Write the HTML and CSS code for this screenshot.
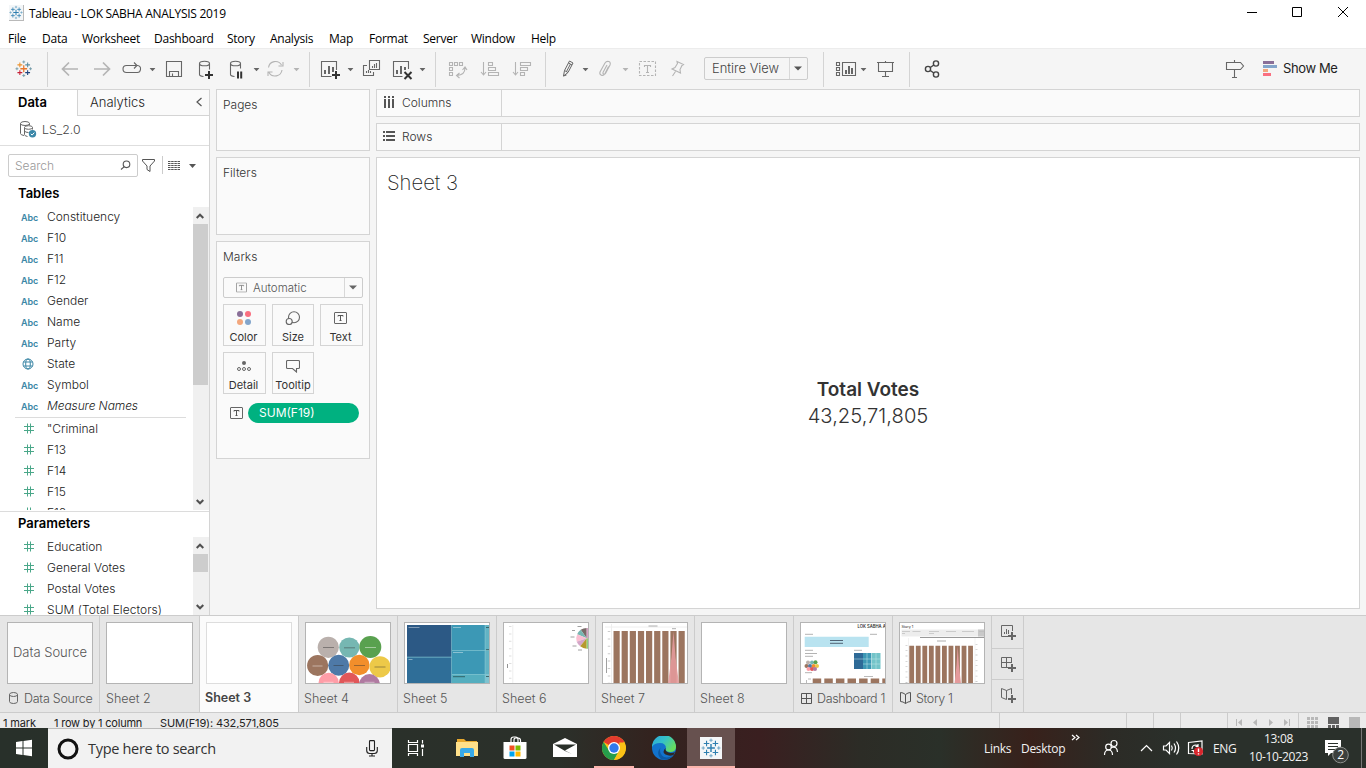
FILE: index.html
```html
<!DOCTYPE html>
<html lang="en">
<head>
<meta charset="utf-8">
<title>Tableau - LOK SABHA ANALYSIS 2019</title>
<link rel="stylesheet" href="styles.css">
</head>
<body>
<svg class="defs" width="0" height="0">
  <defs>
    <symbol id="caret" viewBox="0 0 6 4"><path d="M0 .5h6L3 3.8z"/></symbol>
    <symbol id="hash" viewBox="0 0 12 12"><path d="M4.500 .5v10M7.500 .5v10M1 3.500h10M1 7.500h10" fill="none" stroke="#4aa789"/></symbol>
    <symbol id="plus" viewBox="0 0 8 8"><path d="M4 0v8M0 4h8" fill="none" stroke="#333" stroke-width="2"/></symbol>
    <symbol id="tbox" viewBox="0 0 13 12"><rect x=".5" y=".5" width="12" height="11" rx=".5" fill="none" stroke="#666"/><path d="M4 4.500V3.500h5v1M6.500 3.500v5M5.500 8.500h2" fill="none" stroke="#555"/></symbol>
    <symbol id="up" viewBox="0 0 8 6"><path d="M.7 5L4 1.700 7.300 5" fill="none" stroke="#505050" stroke-width="2"/></symbol>
    <symbol id="down" viewBox="0 0 8 6"><path d="M.7 1L4 4.300 7.300 1" fill="none" stroke="#505050" stroke-width="2"/></symbol>
    <symbol id="mark" viewBox="0 0 18 18">
      <path d="M9 5.500v7M5.500 9h7" stroke="var(--c0)" stroke-width="1.300"/>
      <path d="M5 2.500v5M2.500 5h5" stroke="var(--c1)"/>
      <path d="M13 2.500v5M10.500 5h5" stroke="var(--c2)"/>
      <path d="M5 10.500v5M2.500 13h5" stroke="var(--c3)"/>
      <path d="M13 10.500v5M10.500 13h5" stroke="var(--c4)"/>
      <path d="M9 .5v3M7.500 2h3M9 14.500v3M7.500 16h3M2 7.500v3M.5 9h3M16 7.500v3M14.500 9h3" stroke="var(--c5)" stroke-width=".9"/>
    </symbol>
  </defs>
</svg>

<header class="titlebar">
  <svg class="appicon" width="15" height="16" viewBox="0 0 15 16"><rect width="15" height="16" fill="#b9b9b9"/><rect width="14" height="15" fill="#f3f6f8"/><use href="#mark" x="0" y="0" width="14" height="15"/></svg>
  <span class="apptitle">Tableau - LOK SABHA ANALYSIS 2019</span>
  <svg class="winbtns" width="136" height="26" viewBox="1230 0 136 26"><path d="M1247 12.500h10M1292.500 7.500h9v9h-9zM1338 7l10 10M1348 7l-10 10" fill="none" stroke="#000"/></svg>
</header>

<nav class="menubar">
  <span>File</span><span>Data</span><span>Worksheet</span><span>Dashboard</span><span>Story</span><span>Analysis</span><span>Map</span><span>Format</span><span>Server</span><span>Window</span><span>Help</span>
</nav>

<div class="toolbar">
  <div class="group first">
    <svg class="brand" width="47" height="35" viewBox="0 52 47 35"><use href="#mark" x="15" y="60" width="17.500" height="17.500"/></svg>
  </div>
  <div class="group">
    <svg class="dim" width="39" height="35" viewBox="48 52 39 35"><path d="M78 69H63M69 62.500L62.500 69l6.500 6.500"/></svg>
    <svg class="dim" width="31" height="35" viewBox="87 52 31 35"><path d="M94 69h15M103 62.500l6.500 6.500-6.500 6.500"/></svg>
    <svg width="41" height="35" viewBox="118 52 41 35"><path d="M136 65.500h-9.500a3.500 3.500 0 0 0 0 7h10a3.500 3.500 0 0 0 1-7M134 62.500l3 3-3 3"/><use class="solid" href="#caret" x="149.500" y="67.500" width="6" height="4"/></svg>
    <svg width="31" height="35" viewBox="159 52 31 35"><path d="M166.500 61.500h15v15h-15zM169.500 76.500v-5h9v5M172.500 76v-2.500"/></svg>
    <svg width="32" height="35" viewBox="190 52 32 35"><path d="M199.500 63.500v11q0 1.500 4 2M209.500 63.500v6"/><ellipse cx="204.500" cy="63.500" rx="5" ry="2.300"/><use href="#plus" x="205" y="71" width="8" height="8"/></svg>
    <svg width="41" height="35" viewBox="222 52 41 35"><path d="M230.500 63.500v11q0 1.500 4 2M240.500 63.500v5"/><ellipse cx="235.500" cy="63.500" rx="5" ry="2.300"/><path d="M238 71.500v7M241.200 71.500v7" class="heavy"/><use class="solid" href="#caret" x="253.500" y="67.500" width="6" height="4"/></svg>
    <svg class="dim thin" width="46" height="35" viewBox="263 52 46 35"><path d="M268.500 67.500a7 7 0 0 1 13-2.500M282 70a7 7 0 0 1-13 2.500M283 62v4h-4.500M268 76v-4h4.500"/><use class="solid" href="#caret" x="293.500" y="67.500" width="6" height="4"/></svg>
  </div>
  <div class="group">
    <svg width="49" height="35" viewBox="310 52 49 35"><path d="M336.500 70v-8.500h-15v15h10"/><path class="bars" d="M325 74v-4M329 74v-8M333 72v-5"/><use href="#plus" x="332" y="71" width="8" height="8"/><use class="solid" href="#caret" x="347.500" y="67.500" width="6" height="4"/></svg>
    <svg width="28" height="35" viewBox="359 52 28 35"><path d="M369.500 60.500h10v9h-10zM367 65.500h-3.500v10h10v-3.500M372.500 68v-2M374.500 68v-4M376.500 68v-5M366.500 73v-2M368.500 73v-3M370.500 73v-2"/></svg>
    <svg width="48" height="35" viewBox="387 52 48 35"><path d="M408.500 69v-7.500h-15v15h9"/><path class="bars" d="M397 74v-4M401 74v-8M405 70v-3"/><path class="heavy" d="M404.500 72l7 7M411.500 72l-7 7"/><use class="solid" href="#caret" x="419.500" y="67.500" width="6" height="4"/></svg>
  </div>
  <div class="group">
    <svg class="dim thin" width="35" height="35" viewBox="436 52 35 35"><path d="M449.500 62.500h3v3h-3zM454.500 62.500h3v3h-3zM459.500 62.500h3v3h-3zM449.500 67.500h3v3h-3zM449.500 72.500h3v3h-3zM465 68q0 7-8 7.500M462.500 70l2.500-3 2 3M459.500 73l-3 2.500 3 2.500"/></svg>
    <svg class="dim thin" width="35" height="35" viewBox="471 52 35 35"><path d="M483.500 62v13M481 72l2.500 3 2.500-3M488.500 62.500h4v3h-4zM488.500 67.500h7v3h-7zM488.500 72.500h10v3h-10z"/></svg>
    <svg class="dim thin" width="39" height="35" viewBox="506 52 39 35"><path d="M515.500 62v13M513 72l2.500 3 2.500-3M520.500 62.500h10v3h-10zM520.500 67.500h7v3h-7zM520.500 72.500h4v3h-4z"/></svg>
  </div>
  <div class="group">
    <svg width="46" height="35" viewBox="546 52 46 35"><path class="fine" d="M564.500 70.500l5-9.500 3.500 2-5 9.500-4.500 3.500zM564.500 70.500l3.500 2M563.500 76l3-1M568.500 63l3.500 2M570.500 64l-4 7.500"/><use class="solid" href="#caret" x="582.500" y="67.500" width="6" height="4"/></svg>
    <svg class="dim thin" width="41" height="35" viewBox="592 52 41 35"><path d="M608.500 66.500l-3.500 7c-2 3.500-6 1.500-5-1.500l5-9c2-3 6.500-1.500 5 2l-4.500 8.500c-1 1.500-3 .5-2.500-1l4-7.500"/><use class="solid" href="#caret" x="622.500" y="67.500" width="6" height="4"/></svg>
    <svg class="dim thin" width="30" height="35" viewBox="633 52 30 35"><path stroke-dasharray="2.500 1.500" d="M639.500 61.500h16v14h-16z"/><path d="M644.500 67v-1.500h6V67M647.500 65.500v7M646 72.500h3"/></svg>
    <svg class="dim thin" width="41" height="35" viewBox="663 52 41 35"><path d="M677 61.500l6.500 3-1.500 1-2 4 .5 3.500-8.500-4 3-1.500 2.500-4zM675.500 71.500l-3 4.500"/></svg>
    <div class="select view"><span>Entire View</span><i><svg class="solid" width="8" height="5"><path d="M0 .5h8L4 4.500z"/></svg></i></div>
  </div>
  <div class="group">
    <svg width="46" height="35" viewBox="824 52 46 35"><path d="M836.500 62.500h3v3h-3zM836.500 67.500h3v3h-3zM836.500 72.500h3v3h-3zM842.500 62.500h13v13h-13z"/><path class="bars" d="M846 74v-4M849 74v-8M852 74v-6"/><use class="solid" href="#caret" x="860.500" y="67.500" width="6" height="4"/></svg>
    <svg width="39" height="35" viewBox="870 52 39 35"><path d="M877 62.500h17M878.500 63v8.500h14V63M885.500 61v1M885.500 72v4.500M882 76.500h7"/></svg>
  </div>
  <div class="group">
    <svg class="share" width="44" height="35" viewBox="910 52 44 35"><circle cx="928" cy="69" r="2.600"/><circle cx="936" cy="63.500" r="2.600"/><circle cx="936" cy="74.500" r="2.600"/><path d="M930.300 67.500l3.500-2.500M930.300 70.500l3.500 2.500"/></svg>
  </div>
  <div class="right">
    <svg width="30" height="35" viewBox="1220 52 30 35"><path d="M1226.500 62.500h14l3 3.500-3 3.500h-14zM1234.500 60v2M1234.500 70v7.500M1232 77.500h5"/></svg>
    <svg class="showicon" width="14" height="15"><path fill="#8a6f98" d="M0 0h11v3H0z"/><path fill="#83a5cb" d="M0 4h14v3H0z"/><path fill="#f3a77d" d="M0 8h5v3H0z"/><path fill="#fa6f80" d="M0 12h8v3H0z"/></svg>
    <span class="showme">Show Me</span>
  </div>
</div>

<main class="work">
  <aside class="datapane">
    <div class="panetabs"><b>Data</b><span>Analytics<svg width="6" height="10"><path d="M5.500 1L1 5l4.500 4" fill="none" stroke="#555" stroke-width="1.200"/></svg></span></div>
    <div class="source">
      <svg width="17" height="17" viewBox="0 0 17 17" fill="none" stroke="#666"><path d="M.5 2.500v10q0 1.500 3.500 2M9.500 2.500V4"/><ellipse cx="5" cy="2.500" rx="4.500" ry="2"/><path d="M4.500 6.500v7q0 1.500 3 2M12.500 6.500v2M4.500 10q1 1.500 4 1.500"/><ellipse cx="8.500" cy="6.500" rx="4" ry="1.800" fill="#fff"/><circle cx="12.500" cy="12.800" r="3.700" fill="#3a87a8" stroke="none"/><path d="M10.800 12.800l1.300 1.300 2.200-2.500" stroke="#fff"/></svg>
      <span>LS_2.0</span>
    </div>
    <div class="searchrow">
      <div class="search"><span>Search</span><svg width="11" height="11" fill="none" stroke="#555" stroke-width="1.100"><circle cx="6.500" cy="4.300" r="3.300"/><path d="M4 6.800L1 9.500"/></svg></div>
      <svg width="13" height="13" fill="none" stroke="#555"><path d="M.5.500h12v1.500L8 7v5.500L5 10.500V7L.5 2z"/></svg>
      <svg class="views" width="35" height="20" viewBox="0 0 35 20"><path d="M.5 0v18" stroke="#ccc"/><g stroke="#555" stroke-dasharray="2.500 .67"><path d="M6 5.500h12.500M6 7.500h12.500M6 9.500h12.500M6 11.500h12.500M6 13.500h12.500"/></g><path d="M27 8h7l-3.500 4z" fill="#555"/></svg>
    </div>
    <h2>Tables</h2>
    <div class="scroller tables">
      <ul>
        <li><em>Abc</em>Constituency</li><li><em>Abc</em>F10</li><li><em>Abc</em>F11</li><li><em>Abc</em>F12</li><li><em>Abc</em>Gender</li><li><em>Abc</em>Name</li><li><em>Abc</em>Party</li>
        <li><svg class="globe" width="12" height="12" fill="none" stroke="#3c87a6"><circle cx="6" cy="6" r="5"/><ellipse cx="6" cy="6" rx="2.300" ry="5"/><path d="M1.500 4h9M1.500 8h9"/></svg>State</li>
        <li><em>Abc</em>Symbol</li><li class="slant"><em>Abc</em>Measure Names</li>
        <li class="rule"></li>
        <li><svg class="ic"><use href="#hash"/></svg>"Criminal</li><li><svg class="ic"><use href="#hash"/></svg>F13</li><li><svg class="ic"><use href="#hash"/></svg>F14</li><li><svg class="ic"><use href="#hash"/></svg>F15</li><li><svg class="ic"><use href="#hash"/></svg>F16</li>
      </ul>
      <div class="sb"><svg width="8" height="6"><use href="#up"/></svg><i></i><svg width="8" height="6"><use href="#down"/></svg></div>
    </div>
    <h2 class="params">Parameters</h2>
    <div class="scroller parameters">
      <ul>
        <li><svg class="ic"><use href="#hash"/></svg>Education</li><li><svg class="ic"><use href="#hash"/></svg>General Votes</li><li><svg class="ic"><use href="#hash"/></svg>Postal Votes</li><li class="total"><svg class="ic"><use href="#hash"/></svg>SUM (Total Electors)</li>
      </ul>
      <div class="sb"><svg width="8" height="6"><use href="#up"/></svg><i></i><svg width="8" height="6"><use href="#down"/></svg></div>
    </div>
  </aside>

  <section class="cards">
    <div class="card pages">Pages</div>
    <div class="card filters">Filters</div>
    <div class="card marks">
      <div>Marks</div>
      <div class="select type"><svg width="11" height="11" viewBox="0 0 13 12" opacity=".75"><use href="#tbox"/></svg><span>Automatic</span><i><svg class="solid" width="8" height="5"><path d="M0 .5h8L4 4.500z"/></svg></i></div>
      <div class="markgrid">
        <div><svg width="14" height="14"><circle cx="3" cy="3" r="3" fill="#8a6f98"/><circle cx="11" cy="3" r="3" fill="#fa6f80"/><circle cx="3" cy="11" r="3" fill="#f3a77d"/><circle cx="11" cy="11" r="3" fill="#83a5cb"/></svg>Color</div>
        <div class="size"><svg width="16" height="14" fill="none" stroke="#666" stroke-width="1.100"><circle cx="9" cy="6.200" r="5.500"/><circle cx="4.200" cy="10.500" r="3" fill="#fafafa"/></svg>Size</div>
        <div><svg width="13" height="14" viewBox="0 0 13 14"><use href="#tbox" y="1" width="13" height="12"/></svg>Text</div>
        <div><svg width="14" height="14" fill="none" stroke="#666"><circle cx="7" cy="4" r="2" fill="#666" stroke="none"/><circle cx="2" cy="10" r="1.500"/><circle cx="7" cy="10" r="1.500"/><circle cx="12" cy="10" r="1.500"/></svg>Detail</div>
        <div class="size"><svg width="14" height="14" fill="none" stroke="#666" stroke-width="1.100"><path d="M1.500 1.500h11q1 0 1 1v6q0 1-1 1h-2V13l-4-3.500h-5q-1 0-1-1v-6q0-1 1-1z"/></svg>Tooltip</div>
      </div>
      <div class="pillrow"><svg width="13" height="12"><use href="#tbox"/></svg><span>SUM(F19)</span></div>
    </div>
  </section>

  <section class="canvas">
    <div class="shelf"><div><svg width="12" height="12" stroke="#555" stroke-width="2"><path d="M2 0v2M6 0v2M10 0v2M2 3v9M6 3v9M10 3v9"/></svg>Columns</div></div>
    <div class="shelf"><div><svg width="12" height="12" stroke="#555" stroke-width="2"><path d="M0 2h2M0 6h2M0 10h2M3 2h9M3 6h9M3 10h9"/></svg>Rows</div></div>
    <div class="viz">
      <h1>Sheet 3</h1>
      <div class="kpi"><strong>Total Votes</strong><span>43,25,71,805</span></div>
    </div>
  </section>
</main>

<div class="sheets">
  <div class="tab ds"><div class="thumb">Data Source</div><label><svg width="10" height="12" fill="none" stroke="#666"><ellipse cx="4.500" cy="2.500" rx="4" ry="2"/><path d="M.5 2.500v7q0 2 4 2t4-2v-7"/></svg>Data Source</label></div>
  <div class="tab"><div class="thumb"></div><label>Sheet 2</label></div>
  <div class="tab active"><div class="thumb"></div><label>Sheet 3</label></div>
  <div class="tab"><div class="thumb"><svg viewBox="306 623 84 60"><circle cx="328.300" cy="647.300" r="10.600" fill="#bab0ac"/><circle cx="349.300" cy="647.500" r="10.100" fill="#76b7b2"/><circle cx="370.300" cy="647" r="11" fill="#59a14f"/><circle cx="317.700" cy="665.500" r="10.600" fill="#9c755f"/><circle cx="338.700" cy="665.300" r="10.500" fill="#4e79a7"/><circle cx="359.300" cy="665" r="10.200" fill="#f28e2b"/><circle cx="380" cy="666.800" r="10.600" fill="#edc948"/><circle cx="328.700" cy="683" r="10.200" fill="#ff9da7"/><circle cx="349.300" cy="683" r="10.400" fill="#e15759"/><circle cx="369.500" cy="684.500" r="10.400" fill="#b07aa1"/><path d="M323 647.500h11M344 647.800h11M333.500 665.500h10M354 665.500h11M374.500 667h11" stroke="#333" stroke-opacity=".5" stroke-width=".9"/><path d="M365 647.500h11M312.500 666h10M323.500 682.300h10M344 682.300h10M364.500 682.300h10" stroke="#fff" stroke-opacity=".5" stroke-width=".9"/></svg></div><label>Sheet 4</label></div>
  <div class="tab"><div class="thumb"><svg viewBox="405 623 84 60"><path fill="#7fc3d0" d="M407 625h82v58h-82z"/><path fill="#2c5985" d="M407 625h44.300v31.800H407z"/><path fill="#2f6e98" d="M407 657.600h44.300V683H407z"/><path fill="#3c98b5" d="M452 625h32.700v25H452zM452 650.800h32.700V674H452z"/><path fill="#55aebf" d="M452 674.700h32.700V683H452z"/><path fill="#62b3c4" d="M485.500 625h4v25h-4zM485.500 651h4v23h-4z"/><path d="M408.500 627.500h11M408.500 659.500h4M453 627.500h8M453 652.500h10" stroke="#fff" stroke-opacity=".5" stroke-width=".8"/><path d="M453 676.700h12M486 627.500h3M486 649.700h3M486 676.500h3" stroke="#244" stroke-opacity=".7"/></svg></div><label>Sheet 5</label></div>
  <div class="tab"><div class="thumb"><svg viewBox="504 623 84 60"><path d="M512.800 625v58" stroke="#eee"/><path d="M510.200 626v57" stroke="#ddd" stroke-width="2.500" stroke-dasharray="1 6.400"/><path d="M507.500 664v4" stroke="#777" stroke-width=".8"/><g transform="translate(586.700 638.300)"><path fill="#796b68" d="M0 0L-6-8.500A10.400 10.400 0 0 1 0-10.400z"/><path fill="#76b7b2" d="M0 0l-9.500-4A10.400 10.400 0 0 1-6-8.500z"/><path fill="#fabfd2" d="M0 0l-10 3.500A10.400 10.400 0 0 1-9.500-4z"/><path fill="#d4a6c8" d="M0 0l-6.500 8A10.400 10.400 0 0 1-10 3.500z"/><path fill="#b6992d" d="M0 0v10.400A10.400 10.400 0 0 1-6.500 8z"/><path fill="#d7a0c5" d="M0 0v-10.400h3V0z"/><path fill="#8cd17d" d="M0 0v10.400h3V0z"/></g><path d="M577.500 626.500h4M572 630.500h3M570.500 637h4M572.500 646h4M578 650h4" stroke="#888" stroke-width=".8"/></svg></div><label>Sheet 6</label></div>
  <div class="tab"><div class="thumb"><svg viewBox="603 623 84 60"><path d="M611.500 624v60M605 627h83" stroke="#eee"/><path d="M609 631v52" stroke="#ccc" stroke-width="2.500" stroke-dasharray="1 6.400"/><path d="M606.500 658v15" stroke="#888" stroke-width=".8"/><path d="M648.500 626h9M672 628.700h4" stroke="#999" stroke-width=".8"/><path d="M613.500 657h71.300" stroke="#9c755f" stroke-width="52" stroke-dasharray="6.200 1.930"/><path d="M668 683.500q4-25 5.500-52 1.500 27 5.500 52z" fill="#e49a9b" fill-opacity=".9"/></svg></div><label>Sheet 7</label></div>
  <div class="tab"><div class="thumb"></div><label>Sheet 8</label></div>
  <div class="tab"><div class="thumb"><svg viewBox="801 623 84 60"><text x="857.500" y="628.300" font-size="4.200" font-weight="600" fill="#333">LOK SABHA ANALYSIS</text><path fill="#b9e3f0" d="M804.700 636.700h64V647h-64z"/><path d="M830 640.500h13M830 643.300h13" stroke="#456" stroke-width=".9"/><path d="M805 634.300h8M870 634.300h7M805 650.300h8M854 650.300h8M805 653.500h12M805 656.300h8M805 672.700h7" stroke="#aaa" stroke-width=".9"/><path fill="#2e6a97" d="M854 653h9v16h-9z"/><path fill="#3c98b5" d="M863 653h8.500v16H863z"/><path fill="#73c4c9" d="M871.500 653h9v16h-9z"/><path d="M854 659h26.500M863 664h17.500M867 653v16M871.500 653v16M876 653v16" stroke="#c6e8ea" stroke-width=".5"/><g><circle cx="808" cy="662.500" r="2" fill="#bab0ac"/><circle cx="812" cy="662.500" r="2" fill="#76b7b2"/><circle cx="815.500" cy="662.300" r="2" fill="#59a14f"/><circle cx="806.500" cy="666" r="2" fill="#9c755f"/><circle cx="810" cy="666" r="2" fill="#4e79a7"/><circle cx="813.700" cy="666" r="2" fill="#f28e2b"/><circle cx="817" cy="666" r="2" fill="#edc948"/><circle cx="808.500" cy="669" r="2" fill="#ff9da7"/><circle cx="812" cy="669" r="2" fill="#e15759"/><circle cx="815" cy="669" r="2" fill="#b07aa1"/></g><path d="M812.700 681h73" stroke="#9c755f" stroke-width="5" stroke-dasharray="8.500 3.100"/><path d="M864 676.500h9M808 679h3M806.500 680v3" stroke="#aaa" stroke-width=".8"/></svg></div><label class="dash"><svg width="11" height="11" fill="none" stroke="#555"><path d="M.5.500h10v10H.5zM5.500.5v10M.5 5.500h10"/></svg>Dashboard 1</label></div>
  <div class="tab"><div class="thumb"><svg viewBox="900 623 84 60"><text x="901.500" y="627.600" font-size="3.600" font-weight="500" fill="#444">Story 1</text><path fill="#ededed" d="M901.500 629.500H984v7h-82.500z"/><path fill="#c8c8c8" d="M978 629.500h6v7h-6z"/><path d="M902 631.500h8M912.500 631.500h8M929 631.500h10M946 631.500h10M962 631.500h12M902 633.500h3M929 633.500h5M979 631.500h5" stroke="#bbb" stroke-width=".7"/><path d="M920 637.500h64" stroke="#999"/><path d="M937 641h9" stroke="#999" stroke-width=".8"/><path d="M908.500 638v46M975 638v46" stroke="#eee" stroke-width=".7"/><path d="M906.500 645v38M976.500 644v39" stroke="#ccc" stroke-width="2" stroke-dasharray=".8 4.500"/><path d="M909.300 665h64" stroke="#9c755f" stroke-width="38.500" stroke-dasharray="4.800 1.740"/><path d="M954.500 683.500q2.500-18 3.200-37.500.8 19.500 3.300 37.500z" fill="#e49a9b"/></svg></div><label class="dash"><svg width="11" height="12" fill="none" stroke="#555"><path d="M5.500 2.500v9M.5.500Q3 .5 5.500 2.500 8 .5 10.500.5v9Q8 9.500 5.500 11.500 3 9.500.5 9.500z"/></svg>Story 1</label></div>
  <div class="newbtns">
    <div><svg width="15" height="15" fill="none" stroke="#666"><path d="M11.500 6V.5H.5v11H7M3.500 9V7M5.500 9V4M7.500 9V5"/><path d="M11 7v8M7 11h8" stroke-width="2"/></svg></div>
    <div><svg width="15" height="15" fill="none" stroke="#666"><path d="M10.500 6V.5H.5v10H7M5.500.5v10M.5 5.500h10"/><path d="M11 7v8M7 11h8" stroke-width="2"/></svg></div>
    <div><svg width="15" height="15" fill="none" stroke="#666"><path d="M10.500 6V.5L5.500 2.500.5.500v9l5 2v-9"/><path d="M11 7v8M7 11h8" stroke-width="2"/></svg></div>
  </div>
</div>

<div class="status">
  <span class="s1">1 mark</span><span class="s2">1 row by 1 column</span><span class="s3">SUM(F19): 432,571,805</span>
  <svg width="367" height="15" viewBox="999 713 367 15"><path d="M999.500 713v15M1126.500 713v15M1153.500 713v15M1180.500 713v15M1227.500 713v15M1298.500 713v15" stroke="#ccc"/><g fill="#b8b8b8"><path d="M1236 719h1v7h-1zM1242 719v7l-4-3.500zM1257 719v7l-4-3.500zM1269 719v7l4-3.500zM1284 719v7l4-3.500zM1289 719h1v7h-1z"/><path d="M1307 717h3v3h-3zM1311 717h3v3h-3zM1315 717h3v3h-3zM1307 721h3v3h-3zM1311 721h3v3h-3zM1315 721h3v3h-3zM1307 725h3v3h-3zM1311 725h3v3h-3zM1315 725h3v3h-3zM1349 717h11v11h-11z"/></g><path fill="#606060" d="M1328 717h11v7h-11zM1328 725h3v3h-3zM1332 725h3v3h-3zM1336 725h3v3h-3z"/></svg>
</div>

<footer class="taskbar">
  <svg width="48" height="40" viewBox="0 728 48 40" fill="#fff"><path d="M16 742l6.500-1v6.500H16zM23.500 740.900l8.500-1.200v7.800h-8.500zM16 748.500h6.500v6.500l-6.500-1zM23.500 748.500H32v7.800l-8.500-1.200z"/></svg>
  <div class="winsearch">
    <svg width="22" height="22" fill="none" stroke="#111" stroke-width="3"><circle cx="11" cy="11" r="9"/></svg>
    <span>Type here to search</span>
    <svg width="12" height="17" fill="none" stroke="#222" stroke-width="1.100"><rect x="3.500" y=".6" width="5" height="10" rx=".8"/><path d="M.7 7v3.500q0 3 3 3h4.600q3 0 3-3V7M6 13.500V16M3 16h6"/></svg>
  </div>
  <div class="apps">
    <div class="taskview"><svg width="18" height="16" viewBox="0 0 18 16" fill="none" stroke="#fff" stroke-width="1.200"><path d="M1.500 0v2.500h9V0M1.500 4.500h9v7h-9zM1.500 16v-2.500h9V16M15.500 0v3.500M15.500 9v7"/><path d="M14 4.500h3v3h-3z" fill="#fff" stroke="none"/></svg></div>
    <div class="explorer"><svg width="22" height="20" viewBox="0 0 22 20"><path fill="#e8a92f" d="M1 1h7l2 2h11v4H1z"/><path fill="#ffe08a" d="M0 4h22v14H0z"/><path fill="#38a9e8" d="M4 19v-7q0-2 2-2h10q2 0 2 2v7h-4v-4H8v4z"/></svg></div>
    <div><svg width="24" height="24" viewBox="0 0 24 24"><path d="M8 7V3.500q0-2.500 2.500-2.500h2q2.500 0 2.500 2.500V7M11 6V4q0-2 2-2h2q2.500 0 2.500 2.500V7" fill="none" stroke="#fff" stroke-width="1.200"/><path fill="#fff" d="M.5 6h23v15.500q0 1.500-1.500 1.500H2q-1.500 0-1.500-1.500z"/><path fill="#f25022" d="M6.500 9.500h5v5h-5z"/><path fill="#7fba00" d="M12.500 9.500h5v5h-5z"/><path fill="#00a4ef" d="M6.500 15.500h5v5h-5z"/><path fill="#ffb900" d="M12.500 15.500h5v5h-5z"/></svg></div>
    <div class="mail"><svg width="24" height="20" viewBox="0 0 24 20"><path fill="#fff" d="M0 6l12-6 12 6v13H0z"/><path fill="#2a302a" d="M1 6.500h22L12 12.500l7 3.500L12 13z"/></svg></div>
    <div class="run"><svg width="24" height="24" viewBox="0 0 24 24"><circle cx="12" cy="12" r="12" fill="#fbc116"/><path fill="#e33b2e" d="M12 12L1.600 6A12 12 0 0 1 22.400 6z"/><path fill="#269d4b" d="M1.600 6A12 12 0 0 0 12 24l5-9-5-3-5 2.500z"/><path fill="#fbc116" d="M22.400 6.500A12 12 0 0 1 12 24l5-9 .3-8.500z"/><circle cx="12" cy="12" r="6" fill="#fff"/><circle cx="12" cy="12" r="4.700" fill="#3079ed"/></svg></div>
    <div class="edge"><svg width="24" height="24" viewBox="0 0 24 24"><defs><linearGradient id="eg" x1="0" y1="0" x2="1" y2=".6"><stop offset="0" stop-color="#2aa5dc"/><stop offset=".5" stop-color="#35c1c8"/><stop offset="1" stop-color="#67dd5e"/></linearGradient></defs><circle cx="12" cy="12" r="12" fill="#1273cd"/><path fill="url(#eg)" d="M0 11A12 12 0 0 1 24 11q0 5-6 5-5 0-4-3.500Q14 7 8 7 2 7 0 11z"/><path fill="#0c59a4" d="M8.500 11.500Q7 16 10 19.500t11 .5A12 12 0 0 1 9 23Q3.500 18 8.500 11.500z"/><path fill="#2d2825" d="M13.500 12q-1 4 5 5 3 0 4.500-1l-1.500 3q-4 1.500-8-.5t0-6.500z"/></svg></div>
    <div class="run current"><svg width="22" height="22" viewBox="0 0 22 22"><path fill="#f4f6f8" d="M0 0h22v22H0z"/><use href="#mark" x="1" y="1" width="20" height="20"/></svg></div>
  </div>
  <div class="tray">
    <span class="links">Links</span><span class="desk">Desktop</span>
    <svg class="rest" width="149" height="40" viewBox="1064 728 149 40" fill="none" stroke="#fff" stroke-width="1.200"><path d="M1072 735l3 2.500-3 2.500M1076 735l3 2.500-3 2.500"/><circle cx="1108.500" cy="747" r="2.800"/><circle cx="1114" cy="743.500" r="3"/><path d="M1104.500 755q0-5 4-5t4 5M1111 747.500q6-2 6.500 4.500M1141 751l5.500-5.500 5.500 5.500"/><path d="M1163.500 746v4h2.500l3.500 3.500v-11l-3.500 3.500zM1171.500 745.500q1.500 2.500 0 5M1174 743.500q3 4.500 0 9M1176.500 741.500q4.500 6.500 0 13"/><path d="M1188.500 742.500l13.500-1.500v13l-13.500-.5zM1192 749q0-4 4-4l2 1M1198 744v2.500h-2.500M1191.500 750.500h2v2"/><circle cx="1198.500" cy="751.500" r="4.600" fill="#d9272e" stroke="none"/><path d="M1198.500 748.500v3.500M1198.500 753.200v1.300" stroke-width="1.400"/></svg>
    <span class="eng">ENG</span>
    <div class="clock"><span class="time">13:08</span><span class="date">10-10-2023</span></div>
    <svg width="46" height="40" viewBox="1320 728 46 40"><path fill="#fff" d="M1325 740h16v13h-10l-3 3v-3h-3z"/><path d="M1328 743.500h10M1328 746.500h10M1328 749.500h7" stroke="#2a302b"/><circle cx="1340.500" cy="755" r="7.800" fill="#3c403d" stroke="#8c8f8c"/><text x="1337.300" y="759.300" font-size="12" fill="#fff" font-family="Open Sans">2</text><path d="M1361.500 728v40" stroke="#777"/></svg>
  </div>
</footer>
</body>
</html>
```
FILE: styles.css
```css
* { box-sizing: border-box; }
body {
  margin: 0; width: 1366px; height: 768px; overflow: hidden;
  display: flex; flex-direction: column;
  background: #f5f5f5; color: #333;
  font-family: Inter, "Open Sans", sans-serif; font-size: 12px; font-weight: 300;
}
svg { display: block; flex: none; }
.defs { position: absolute; }
:root { --c0: #2f7fb0; --c1: #2f7fb0; --c2: #2f7fb0; --c3: #2f7fb0; --c4: #2f7fb0; --c5: #6ea6c6; }
.brand { --c0: #e8762b; --c1: #eb912b; --c2: #5c8ea0; --c3: #c72037; --c4: #1f447e; --c5: #7199a6; }

.titlebar { height: 26px; background: #fff; display: flex; align-items: center; padding-left: 9px; color: #000; font-family: "Open Sans", sans-serif; font-weight: 400; flex: none; }
.apptitle { margin-left: 5px; letter-spacing: -.29px; }
.winbtns { margin-left: auto; }
.menubar { height: 22px; background: #fff; flex: none; padding: 3px 0 0 8px; display: grid; align-items: start; grid-template-columns: 34px 40px 72px 73px 43px 59px 40px 54px 48px 60px 40px; color: #000; font-family: "Open Sans", sans-serif; font-weight: 400; letter-spacing: -.25px; line-height: 20px; }

.toolbar { height: 41px; flex: none; border-top: 1px solid #ececec; padding-top: 3px; display: flex; align-items: flex-start; }
.group { display: flex; height: 35px; border-left: 1px solid #d4d4d4; }
.group.first { border: 0; }
.toolbar svg { fill: none; stroke: #666; stroke-width: 1.1; }
.toolbar svg.dim { stroke: #b4b4b4; stroke-width: 1.7; fill: none; }
.toolbar svg.thin { stroke-width: 1.1; }
.toolbar .solid, .solid { fill: #666; stroke: none; }
.toolbar .select .solid { fill: #555; stroke: none; }
.toolbar .dim .solid { fill: #b4b4b4; }
.toolbar .bars { stroke-width: 2; }
.toolbar .heavy { stroke: #333; stroke-width: 2; }
.toolbar .fine { stroke-width: 1; }
.toolbar .share { stroke: #444; stroke-width: 1.4; }
.right { margin-left: auto; display: flex; height: 35px; padding-right: 29px; }
.toolbar .right .showicon { margin: 9px 6px 0 13px; stroke: none; }
.showme { font-size: 13px; line-height: 33px; color: #222; width: 54px; white-space: nowrap; letter-spacing: -.4px; font-weight: 400; }
.select { border: 1px solid #ccc; border-radius: 2px; display: flex; align-items: center; color: #444; }
.select i { margin-left: auto; width: 18px; align-self: stretch; border-left: 1px solid #d8d8d8; display: flex; align-items: center; justify-content: center; padding-right: 1px; }
.select.view { width: 104px; height: 23px; margin: 5px 15px 0 0; padding-left: 7px; font-size: 12.9px; }

.work { height: 526px; flex: none; display: flex; }
.datapane { width: 210px; flex: none; background: #fff; border-top: 1px solid #d4d4d4; border-right: 1px solid #d4d4d4; display: flex; flex-direction: column; overflow: hidden; }
.panetabs { display: flex; height: 26px; flex: none; font-size: 13px; line-height: 25px; color: #222; }
.panetabs b { width: 77px; padding-left: 18px; font-weight: 600; color: #000; }
.panetabs span { flex: 1; border: solid #d4d4d4; border-width: 0 0 1px 1px; background: #fafafa; padding: 0 7px 0 12px; display: flex; align-items: center; justify-content: space-between; }
.panetabs svg { margin-bottom: 2px; }
.source { height: 30px; flex: none; border-bottom: 1px solid #dedede; display: flex; align-items: center; gap: 5px; padding: 0 0 2px 20px; font-size: 12.3px; color: #444; }
.searchrow { display: flex; align-items: center; height: 23px; margin: 8px 0 0 8px; flex: none; }
.search { width: 130px; height: 23px; border: 1px solid #ccc; border-radius: 2px; display: flex; justify-content: space-between; align-items: center; padding: 0 6px; color: #999; margin-right: 4px; }
.views { margin-left: 7px; }
h2 { margin: 0; font-size: 13px; font-weight: 600; color: #000; padding-left: 18px; line-height: 32px; height: 29px; flex: none; }
h2.params { height: 26px; line-height: 23px; border-top: 1px solid #dcdcdc; }
.scroller { display: flex; overflow: hidden; flex: none; }
.tables { height: 304px; margin-bottom: 1px; }
.parameters { height: 78px; }
ul { list-style: none; margin: -1px 0 0; padding: 0; flex: 1; }
.tables ul { margin-top: 0; }
li { height: 21px; display: flex; align-items: center; color: #222; line-height: 21px; white-space: nowrap; }
li em { width: 26px; margin-left: 21px; font-style: normal; font-weight: 600; font-size: 9px; letter-spacing: -.1px; color: #3c87a6; padding-top: 1px; }
li .globe { margin: 0 13px 0 22px; }
li .ic { width: 12px; height: 12px; margin: 1px 12px 0 23px; }
.slant { font-style: italic; letter-spacing: -.1px; }
li.rule { height: 1px; margin: 1px 7px 0 15px; background: #dcdcdc; }
.total { letter-spacing: .06px; }
.sb { width: 16px; background: #f0f0f0; display: flex; flex-direction: column; align-items: center; margin-top: 1px; padding: 6px 2px 5px 0; }
.parameters .sb { margin-top: 0; }
.sb i { width: 15px; background: #cdcdcd; margin: 5px 0 auto 0; flex: none; align-self: flex-start; }
.tables .sb i { height: 161px; }
.parameters .sb i { height: 18px; }

.cards { width: 154px; margin-left: 6px; flex: none; display: flex; flex-direction: column; gap: 6px; }
.card { background: #fafafa; border: 1px solid #d4d4d4; padding: 7px 6px; color: #333; line-height: 16px; }
.pages { height: 62px; } .filters { height: 78px; } .marks { height: 218px; }
.select.type { height: 21px; margin-top: 12px; padding-left: 12px; gap: 6px; color: #555; font-size: 11.5px; }
.markgrid { display: grid; grid-template-columns: 43px 42px 43px; grid-auto-rows: 42px; gap: 6px; margin-top: 6px; }
.markgrid div { border: 1px solid #d4d4d4; display: flex; flex-direction: column; align-items: center; justify-content: space-between; padding: 6px 2px 0 0; font-size: 11px; color: #333; white-space: nowrap; font-weight: 400; }
.markgrid .size { padding-right: 0; }
.markgrid div svg { margin-bottom: 4px; }
.pillrow { display: flex; align-items: center; margin: 9px 4px 0 7px; gap: 5px; }
.pillrow span { flex: 1; height: 20px; border-radius: 10px; background: #00b180; color: #fff; padding-left: 11px; line-height: 20px; font-weight: 400; }

.canvas { width: 984px; margin-left: 6px; display: flex; flex-direction: column; gap: 6px; flex: none; }
.shelf { height: 28px; border: 1px solid #d4d4d4; background: #fafafa; display: flex; flex: none; }
.shelf div { width: 125px; border-right: 1px solid #d4d4d4; display: flex; align-items: center; gap: 7px; padding: 0 0 2px 6px; color: #333; }
.viz { height: 452px; background: #fff; border: 1px solid #d4d4d4; display: flex; flex-direction: column; }
h1 { margin: 11px 0 0 10px; font-size: 20.3px; line-height: 28px; font-weight: 200; color: #222; }
.kpi { margin: auto 0; padding: 0; display: flex; flex-direction: column; align-items: center; line-height: 26px; color: #333; font-size: 20.2px; }
.kpi strong { font-size: 19px; font-weight: 600; }

.sheets { height: 98px; flex: none; background: #e6e6e6; border: solid #ccc; border-width: 1px 0; display: flex; }
.tab { width: 99px; flex: none; border-right: 1px solid #ccc; padding: 6px 5px 0 6px; font-size: 12.500px; color: #555; }
.tab.ds { width: 100px; padding-left: 7px; }
.tab.active { background: #fbfbfb; }
.tab:nth-child(2) { width: 100px; }
.tab:nth-child(2) .thumb { width: 87px; }
.tab:nth-child(2) label { margin-left: 0; }
.thumb { width: 86px; height: 62px; border: 1px solid #b4b4b4; background: #fff; overflow: hidden; }
.thumb svg { width: 84px; height: 60px; }
.ds .thumb { background: #fafafa; text-align: center; line-height: 59px; font-size: 13px; white-space: nowrap; }
.active .thumb { border-color: #ddd; }
.tab label { display: flex; align-items: center; gap: 5px; height: 28px; margin-left: -1px; white-space: nowrap; }
.tab label svg { margin-left: 1px; }
.ds label { padding-left: 2px; letter-spacing: -.25px; }
.tab label.dash { margin-left: 0; letter-spacing: -.35px; }
.active label { font-weight: 600; height: 26px; color: #444; }
.newbtns { width: 32px; border-right: 1px solid #ccc; display: flex; flex-direction: column; }
.newbtns div { height: 32px; border-bottom: 1px solid #ccc; padding: 8px 0 0 9px; }
.newbtns div:first-child { height: 33px; padding-top: 9px; }
.newbtns div:last-child { border: 0; }

.status { height: 15px; flex: none; background: #ebebeb; overflow: hidden; display: flex; font-size: 11px; line-height: 20px; color: #222; padding-left: 3px; white-space: nowrap; font-weight: 400; letter-spacing: -.13px; }
.s1 { width: 51px; } .s2 { width: 106px; letter-spacing: -.2px; }
.status svg { margin-left: auto; }

.taskbar { height: 40px; flex: none; display: flex; background: linear-gradient(90deg, #28302a 0, #2b302a 560px, #33231f 650px, #3a1f20 760px, #2c2c26 860px, #2a3029 940px, #38211b 1030px, #2c2b26 1110px, #2a302b 1180px); color: #f2f2f2; font-family: "Open Sans", sans-serif; font-weight: 400; }
.winsearch { width: 344px; background: #f2f2f2; border-top: 1px solid #bbb; display: flex; align-items: center; padding: 0 14px 0 9px; color: #333; font-size: 14.500px; flex: none; }
.winsearch span { margin: 0 auto 0 9px; letter-spacing: -.3px; }
.apps { display: flex; flex: none; }
.apps div { width: 49px; display: flex; align-items: center; justify-content: center; }
.apps .taskview { padding-right: 2px; }
.apps .explorer, .apps .mail { padding-left: 2px; }
.apps .run { width: 40px; margin: 0 5px 0 6px; border-bottom: 2px solid #fbb4ac; padding-top: 2px; }
.apps .current { width: 48px; margin: 0 0 0 -1px; background: #67514f; }
.tray { margin-left: auto; display: flex; align-items: center; letter-spacing: -.3px; white-space: nowrap; }
.links { width: 37px; } .desk { width: 43px; } .eng { width: 36px; }
.clock { width: 71px; display: flex; flex-direction: column; line-height: 18px; padding-bottom: 1px; }
.time { padding-left: 15px; }
.date { letter-spacing: -.35px; }
```
